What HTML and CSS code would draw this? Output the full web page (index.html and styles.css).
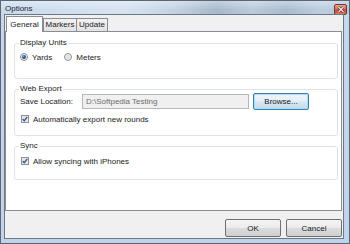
FILE: index.html
```html
<!DOCTYPE html>
<html>
<head>
<meta charset="utf-8">
<link rel="stylesheet" href="styles.css">
</head>
<body>
<div class="window">
  <div class="titlebar">
    <span class="title">Options</span>
    <span class="close"><svg width="8" height="7" viewBox="0 0 8 7"><path d="M1.5 1 L6.5 6 M6.5 1 L1.5 6" stroke="#4a1d14" stroke-width="2.4"/><path d="M1.5 1 L6.5 6 M6.5 1 L1.5 6" stroke="#f4eeee" stroke-width="1.2"/></svg></span>
  </div>
  <div class="client">
    <div class="tabs">
      <div class="tab active">General</div>
      <div class="tab t2">Markers</div>
      <div class="tab t3">Update</div>
    </div>
    <div class="panel">
      <fieldset class="group g1">
        <legend>Display Units</legend>
        <div class="radios">
          <span class="opt"><svg class="radio" width="8" height="8" viewBox="0 0 8 8"><circle cx="4" cy="4" r="3.5" fill="#eef0f2" stroke="#8d9093"/><circle cx="4" cy="4" r="2" fill="#28568a"/><circle cx="3.5" cy="3.4" r="0.8" fill="#7fa6cf"/></svg>Yards</span>
          <span class="opt"><svg class="radio" width="8" height="8" viewBox="0 0 8 8"><circle cx="4" cy="4" r="3.5" fill="#eef0f2" stroke="#8d9093"/><circle cx="4" cy="4" r="2.2" fill="#dfe2e5"/></svg>Meters</span>
        </div>
      </fieldset>
      <fieldset class="group g2">
        <legend>Web Export</legend>
        <div class="row">
          <span class="label">Save Location:</span>
          <span class="textbox">D:\Softpedia Testing</span>
          <span class="btn browse">Browse...</span>
        </div>
        <div class="check c1"><svg class="cb" width="8" height="8" viewBox="0 0 8 8"><rect x="0.5" y="0.5" width="7" height="7" fill="#f2f3f4" stroke="#8e8f8f"/><rect x="1.5" y="1.5" width="5" height="5" fill="#dfe1e4"/><path d="M1.7 4.1 L3.2 5.8 L6.3 1.8" fill="none" stroke="#344c8a" stroke-width="1.3"/></svg>Automatically export new rounds</div>
      </fieldset>
      <fieldset class="group g3">
        <legend>Sync</legend>
        <div class="check c2"><svg class="cb" width="8" height="8" viewBox="0 0 8 8"><rect x="0.5" y="0.5" width="7" height="7" fill="#f2f3f4" stroke="#8e8f8f"/><rect x="1.5" y="1.5" width="5" height="5" fill="#dfe1e4"/><path d="M1.7 4.1 L3.2 5.8 L6.3 1.8" fill="none" stroke="#344c8a" stroke-width="1.3"/></svg>Allow syncing with iPhones</div>
      </fieldset>
    </div>
    <div class="footer">
      <span class="btn">OK</span>
      <span class="btn">Cancel</span>
    </div>
  </div>
</div>
</body>
</html>
```

FILE: styles.css
```css
html, body {
  margin: 0;
  padding: 0;
  background: #ffffff;
}
body {
  font-family: "Liberation Sans", Arial, sans-serif;
  font-size: 8px;
  color: #1a1a1a;
}
.window {
  width: 350px;
  height: 244px;
  box-sizing: border-box;
  border: 1px solid #5d6773;
  background: linear-gradient(to bottom, #c7d8ec, #bfd3ea);
  padding: 0 5px 4px 3px;
  display: flex;
  flex-direction: column;
}
.titlebar {
  height: 13px;
  margin: 0 -5px 0 -3px;
  padding: 0 2px 0 4px;
  display: flex;
  align-items: center;
  justify-content: space-between;
  background:
    linear-gradient(to bottom, rgba(255,255,255,0.35), rgba(255,255,255,0) 70%),
    linear-gradient(to right, #c9daed 0%, #d6e3f1 35%, #c3d2e3 50%, #a6b8cc 62%, #b9cadc 72%, #a9bbcf 82%, #bccde0 92%, #b3c6db 100%);
}
.title {
  color: #1b2430;
  line-height: 10px;
  padding-top: 2px;
}
.close {
  width: 13px;
  height: 11px;
  margin-top: 4px;
  box-sizing: border-box;
  border: 1px solid #6b3a33;
  border-radius: 2px;
  background: linear-gradient(to bottom, #e8a494 0%, #d9705a 45%, #c8432c 55%, #dc7c60 100%);
  display: flex;
  align-items: center;
  justify-content: center;
}
.close svg { display: block; }
.client {
  flex: 1;
  border: 1px solid #6e7885;
  background: #f0f0f0;
  display: flex;
  flex-direction: column;
}
.tabs {
  height: 16px;
  display: flex;
  align-items: flex-end;
  padding-left: 1px;
}
.tab {
  height: 12px;
  border: 1px solid #898c95;
  border-bottom: none;
  border-right: none;
  background: linear-gradient(to bottom, #f2f2f2, #e2e2e2);
  line-height: 12px;
  text-align: center;
  box-sizing: content-box;
}
.tab.t3 { border-right: 1px solid #898c95; }
.tab.active {
  width: 35px;
  height: 15px;
  margin-bottom: -1px;
  background: #ffffff;
  border-right: 1px solid #898c95;
  position: relative;
  z-index: 1;
  line-height: 15px;
}
.tab.t2 { width: 32px; }
.tab.t3 { width: 30px; }
.panel {
  height: 172px;
  border: 1px solid #898c95;
  background: #ffffff;
  margin-right: 1px;
  padding: 6px 3px 0 8px;
  display: flex;
  flex-direction: column;
  gap: 5px;
}
.group {
  margin: 0;
  padding: 0 0 0 5px;
  border: 1px solid #dde3e8;
  border-radius: 3px;
  min-width: 0;
}
.group legend {
  padding: 0 1px;
  margin-left: -1px;
  line-height: 10px;
  color: #1a1a1a;
}
.g1 { padding-top: 4px; padding-bottom: 16px; }
.g2 { padding-top: 0; padding-bottom: 11px; }
.g3 { padding-top: 5px; padding-bottom: 13px; }
.radios {
  display: flex;
  height: 10px;
  align-items: center;
  gap: 12px;
}
.opt {
  display: flex;
  align-items: center;
  gap: 4px;
}
.radio, .cb { display: block; flex: none; }
.row {
  display: flex;
  align-items: center;
  height: 17px;
  margin-top: -1px;
}
.label {
  width: 62px;
}
.textbox {
  width: 162px;
  height: 13px;
  border: 1px solid #b4b8bc;
  background: #f0f0f0;
  color: #6d6d6d;
  line-height: 13px;
  padding-left: 3px;
  box-sizing: content-box;
  margin-right: 4px;
}
.btn {
  display: flex;
  align-items: center;
  justify-content: center;
  box-sizing: border-box;
  border: 1px solid #707070;
  border-radius: 2px;
  background: linear-gradient(to bottom, #f4f4f4 0%, #ebebeb 48%, #dcdcdc 52%, #cfcfcf 100%);
  color: #1a1a1a;
}
.browse {
  width: 56px;
  height: 17px;
  border-color: #3c7fb1;
  box-shadow: inset 0 0 0 1px #a6dcf4;
  background: linear-gradient(to bottom, #f0f6fa 0%, #e4eff7 48%, #d3e6f3 52%, #c6dcec 100%);
}
.check {
  display: flex;
  align-items: center;
  gap: 4px;
  height: 10px;
  padding-left: 1px;
}
.c1 { margin-top: 4px; }
.footer {
  flex: 1;
  display: flex;
  justify-content: flex-end;
  align-items: flex-start;
  gap: 5px;
  padding: 8px 1px 0 0;
}
.footer .btn {
  width: 56px;
  height: 18px;
}
```
